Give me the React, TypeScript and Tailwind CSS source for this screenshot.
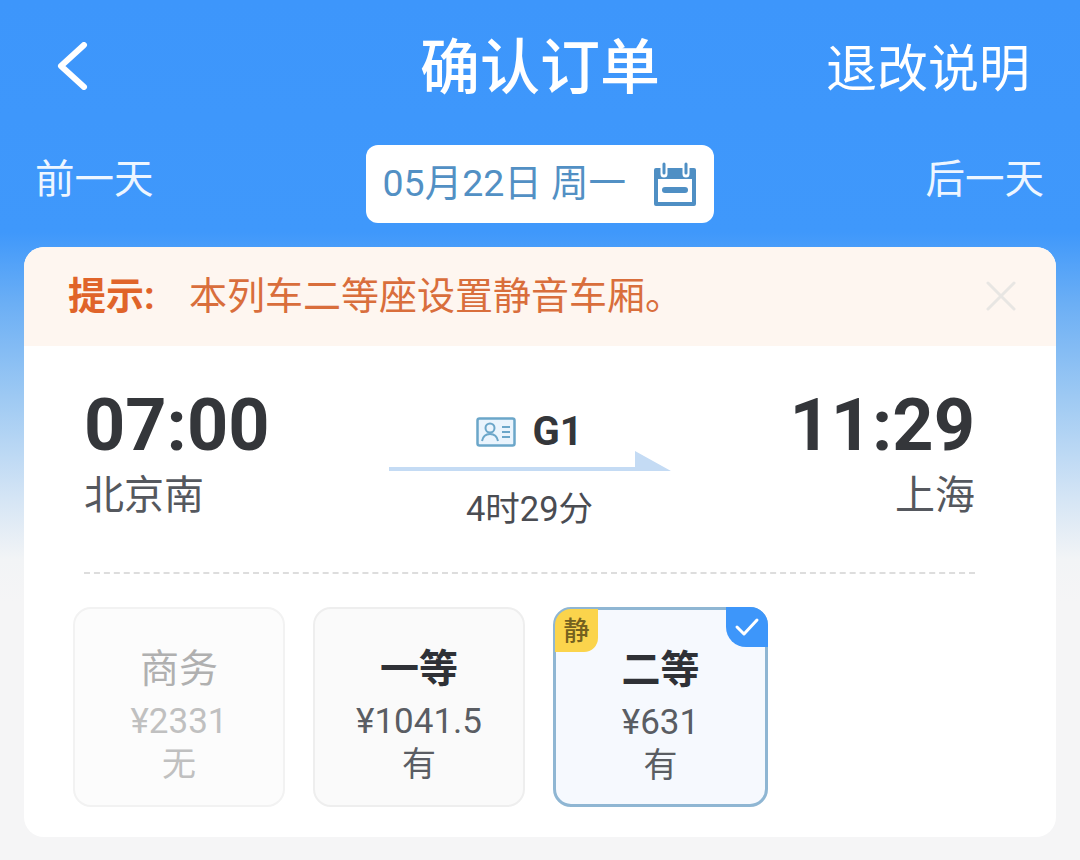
import React from "react";

const font = { fontFamily: '"Roboto", "Noto Sans CJK SC", sans-serif' };

function Seat({ name, price, avail, variant }: { name: string; price: string; avail: string; variant: "off" | "on" | "sel" }) {
  const box =
    variant === "sel"
      ? "w-[215px] border-[3px] border-[#8fb6d3] bg-[#f6f9fe]"
      : variant === "off"
      ? "w-[212px] border-2 border-[#f2f2f2] bg-[#fcfcfc]"
      : "w-[212px] border-2 border-[#eeeeee] bg-[#fafafa]";
  const nameC = variant === "off" ? "text-[#b0b0b0]" : "text-[#2f3136] font-bold";
  const subC = variant === "off" ? "text-[#c0c0c0]" : "text-[#5a5d63]";
  return (
    <div className={`relative flex h-[200px] flex-col items-center rounded-[18px] pt-[34px] ${box}`}>
      {variant === "sel" && (
        <>
          <div className="absolute -left-[1px] -top-[1px] flex h-[43px] w-[43px] items-center justify-center rounded-br-[14px] rounded-tl-[16px] bg-[#fbd44c] text-[26px] font-medium leading-none text-[#75611f]">静</div>
          <div className="absolute -right-[3px] -top-[3px] flex h-[40px] w-[42px] items-center justify-center rounded-bl-[20px] rounded-tr-[18px] bg-[#3d96fa]">
            <svg width="26" height="20" viewBox="0 0 26 20" fill="none">
              <path d="M3 10l7 7L23 3" stroke="#ffffff" strokeWidth="3" strokeLinecap="round" strokeLinejoin="round" />
            </svg>
          </div>
        </>
      )}
      <div className={`text-[39px] leading-[52px] ${nameC}`}>{name}</div>
      <div className={`mt-[6px] text-[35px] leading-[42px] ${subC}`}>{price}</div>
      <div className={`text-[34px] leading-[42px] ${subC}`}>{avail}</div>
    </div>
  );
}

export default function App() {
  return (
    <div style={font} className="h-[860px] w-[1080px] overflow-hidden bg-[linear-gradient(180deg,#3d96fb_0%,#3f98fb_27%,#6aaef5_35%,#9fcaf3_46.5%,#d5e5f5_58%,#f2f4f6_65%,#f5f5f6_70%)]">
      <header className="grid h-[145px] grid-cols-[1fr_auto_1fr] items-center px-[50px] pb-[7px] text-white">
        <svg width="32" height="48" viewBox="0 0 32 48" fill="none" className="mb-[7px] ml-[6px]">
          <path d="M28 3L5 24l23 21" stroke="#ffffff" strokeWidth="6" strokeLinecap="round" strokeLinejoin="round" />
        </svg>
        <div className="text-[60px] font-medium leading-none">确认订单</div>
        <div className="justify-self-end text-[51px] leading-none">退改说明</div>
      </header>
      <div className="flex h-[78px] items-center justify-between pl-[35px] pr-[36px] text-[39.5px] leading-none text-[#eef6ff]">
        <span className="mb-[8px] w-[120px]">前一天</span>
        <div className="flex h-[78px] w-[348px] items-center justify-between rounded-[12px] bg-white pl-[17px] pr-[18px] text-[37.5px] text-[#5290c4]">
          <span className="whitespace-pre">05月22日 周一</span>
          <svg width="42" height="44" viewBox="0 0 42 44" fill="none">
            <path d="M2 8h38v34H2z" stroke="#4f8fc4" strokeWidth="4" strokeLinejoin="round" />
            <path d="M2 8h38v9H2z" fill="#4f8fc4" />
            <path d="M10 2v10M32 2v10" stroke="#ffffff" strokeWidth="7" strokeLinecap="round" />
            <path d="M10 2v9M32 2v9" stroke="#4f8fc4" strokeWidth="3" strokeLinecap="round" />
            <path d="M11 28h20" stroke="#4f8fc4" strokeWidth="6" strokeLinecap="round" />
          </svg>
        </div>
        <span className="mb-[8px] w-[120px] text-right">后一天</span>
      </div>
      <main className="mx-[24px] mt-[24px] h-[590px] overflow-hidden rounded-[20px] bg-white">
        <div className="flex h-[99px] items-center bg-[#fef6f0] pb-[2px] pl-[44px] pr-[40px] text-[38px] leading-none">
          <b className="w-[121px] font-bold text-[#e0642a]">提示:</b>
          <span className="flex-1 text-[#d96e3c]">本列车二等座设置静音车厢。</span>
          <svg width="30" height="30" viewBox="0 0 30 30" fill="none">
            <path d="M2 2l26 26M28 2L2 28" stroke="#e8e6e3" strokeWidth="3" strokeLinecap="round" />
          </svg>
        </div>
        <div className="ml-[60px] mr-[81px] flex h-[228px] justify-between border-b-2 border-dashed border-[#dddddd] pt-[38px]">
          <div>
            <div className="text-[72px] font-bold leading-[84px] text-[#34363a]">07:00</div>
            <div className="mt-[6px] text-[40px] leading-[44px] text-[#55585e]">北京南</div>
          </div>
          <div className="flex w-[282px] flex-col items-center pt-[26px]">
            <div className="flex h-[44px] items-center gap-[16px]">
              <svg width="40" height="30" viewBox="0 0 40 30" fill="none">
                <rect x="1.5" y="1.5" width="37" height="27" rx="2" fill="#eaf4fd" stroke="#6ba6c9" strokeWidth="2.5" />
                <circle cx="14" cy="11" r="4.5" stroke="#6ba6c9" strokeWidth="2" />
                <path d="M6 24c1-5 4-7 8-7s7 2 8 7" stroke="#6ba6c9" strokeWidth="2" />
                <path d="M26 10h8M26 15h8M26 20h8" stroke="#6ba6c9" strokeWidth="2" />
              </svg>
              <span className="text-[40px] font-bold leading-none text-[#34363a]">G1</span>
            </div>
            <svg width="282" height="22" viewBox="0 0 282 22" className="mt-[-4px]">
              <path d="M0 17h246V1l36 20H0z" fill="#c4dbf4" />
            </svg>
            <div className="mt-[17px] text-[34.5px] leading-[40px] text-[#4a4c52]">4时29分</div>
          </div>
          <div className="text-right">
            <div className="text-[72px] font-bold leading-[84px] text-[#34363a]">11:29</div>
            <div className="mt-[6px] text-[40px] leading-[44px] text-[#55585e]">上海</div>
          </div>
        </div>
        <div className="flex gap-[28px] pl-[49px] pt-[33px]">
          <Seat name="商务" price="¥2331" avail="无" variant="off" />
          <Seat name="一等" price="¥1041.5" avail="有" variant="on" />
          <Seat name="二等" price="¥631" avail="有" variant="sel" />
        </div>
      </main>
    </div>
  );
}
